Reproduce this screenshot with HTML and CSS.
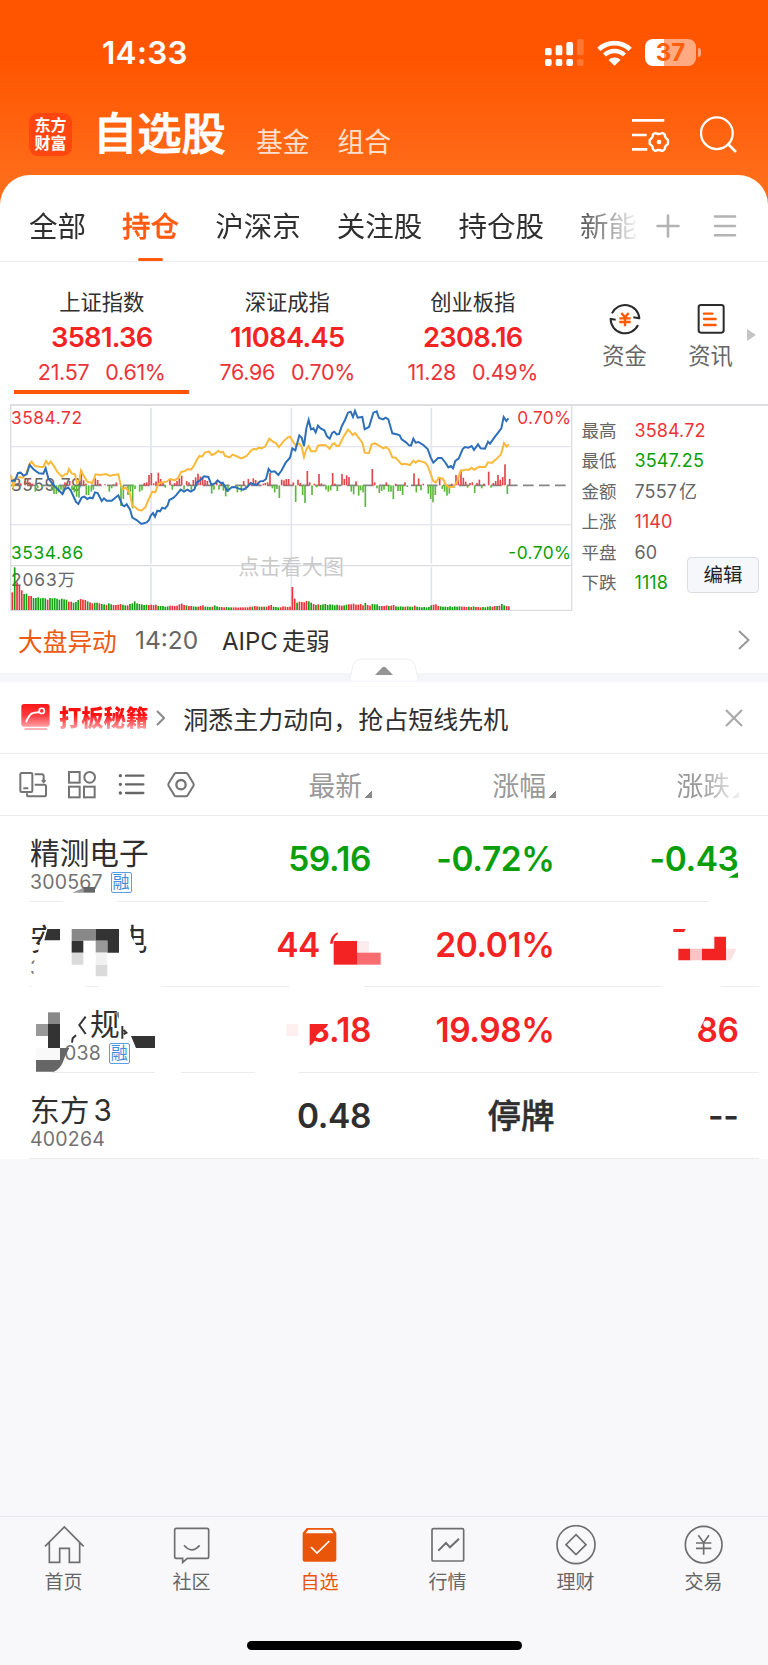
FILE: index.html
```html
<!DOCTYPE html>
<html lang="zh-CN">

<head>
    <meta charset="UTF-8">
    <meta name="viewport" content="width=device-width, initial-scale=1.0">
    <title>自选股</title>
    <link rel="stylesheet" href="styles.css">
</head>

<body>
    <header>
        <div class="status-bar">
            <span class="clock">14:33</span>
            <svg class="signal" viewBox="0 0 117 84" fill="#fff">
                <rect x="0" y="27" width="20" height="22" rx="5" />
                <rect x="32" y="19" width="20" height="30" rx="5" />
                <rect x="64" y="9" width="20" height="40" rx="5" />
                <rect x="96" y="0" width="20" height="49" rx="5" opacity=".2" />
                <rect x="0" y="60" width="20" height="21" rx="6" />
                <rect x="32" y="60" width="20" height="21" rx="6" />
                <rect x="64" y="60" width="20" height="21" rx="6" />
                <rect x="96" y="60" width="20" height="21" rx="6" opacity=".2" />
            </svg>
            <svg class="wifi" viewBox="0 0 104 78" fill="none" stroke="#fff">
                <path d="M5 28 C31 3 73 3 99 28" stroke-width="14" />
                <path d="M22 45 C39 29 65 29 82 45" stroke-width="13" />
                <path d="M34 60 C43 50 61 50 70 60 L52 77 Z" fill="#fff" stroke="none" />
            </svg>
            <div class="battery">37</div>
            <div class="battery-tip"></div>
        </div>
        <div class="title-bar">
            <div class="logo">东方<br>财富</div>
            <h1>自选股</h1>
            <a class="top-link">基金</a>
            <a class="top-link">组合</a>
            <svg class="icon-manage" viewBox="0 0 114 102" fill="none" stroke="#fff" stroke-width="8">
                <path d="M0 7H97M0 51H44M0 94H46" />
                <path d="M70 45 Q80 51 91 45 L98 49 Q98 60 108 66 V78 Q98 83 98 94 L91 99 Q80 93 70 99 L63 94 Q63 83 53 78 V66 Q63 60 63 49 Z" stroke-width="7" stroke-linejoin="round" />
                <circle cx="81" cy="72" r="7" fill="#fff" stroke="none" />
            </svg>
            <svg class="icon-search" viewBox="0 0 112 112" fill="none" stroke="#fff" stroke-width="7">
                <circle cx="51" cy="52" r="48" />
                <path d="M84 84L109 109" stroke-width="8" />
            </svg>
        </div>
    </header>

    <nav class="groups">
        <div class="group-list">
            <a>全部</a>
            <a class="active">持仓</a>
            <a>沪深京</a>
            <a>关注股</a>
            <a>持仓股</a>
            <a>新能源</a>
        </div>
        <svg class="icon-plus" viewBox="0 0 24 24" stroke="#b3b3b3" stroke-width="2.6" stroke-linecap="round">
            <path d="M1.5 12H22.5M12 1.5V22.5" />
        </svg>
        <svg class="icon-menu" viewBox="0 0 24 24" stroke="#b3b3b3" stroke-width="2.6" stroke-linecap="round">
            <path d="M2 2.5H22M2 12H22M2 21.3H22" />
        </svg>
    </nav>

    <section class="indexes">
        <div class="index active">
            <p class="index-name">上证指数</p>
            <p class="index-value">3581.36</p>
            <p class="index-change"><span>21.57</span><span>0.61%</span></p>
        </div>
        <div class="index">
            <p class="index-name">深证成指</p>
            <p class="index-value">11084.45</p>
            <p class="index-change"><span>76.96</span><span>0.70%</span></p>
        </div>
        <div class="index">
            <p class="index-name">创业板指</p>
            <p class="index-value">2308.16</p>
            <p class="index-change"><span>11.28</span><span>0.49%</span></p>
        </div>
        <div class="shortcut">
            <svg viewBox="0 0 96 96" fill="none" stroke="#2b2b2b" stroke-width="6">
                <path d="M9 31A43 43 0 0 1 91 46L73 43M2 47L20 50M5 47A43 43 0 0 0 87 66" stroke-linejoin="round" />
                <path d="M37 30L48 43L59 30M31 46H65M31 57H65M48 43V70" stroke="#ff5a00" stroke-width="7" />
            </svg>
            <span>资金</span>
        </div>
        <div class="shortcut">
            <svg viewBox="0 0 96 96" fill="none" stroke="#2b2b2b" stroke-width="6">
                <rect x="11" y="6" width="75" height="83" rx="7" />
                <path d="M27 32H52M27 48H62M27 66H62" stroke="#ff5a00" stroke-width="7" stroke-linecap="round" />
            </svg>
            <span>资讯</span>
        </div>
        <svg class="more" viewBox="0 0 9 12">
            <path d="M0 0L9 6L0 12Z" fill="#c4c4c4" />
        </svg>
    </section>

    <section class="market">
        <!-- 分时图 -->
        <svg class="chart" viewBox="0 27 1722 624">
            <g fill="none" stroke="#e2e4ee" stroke-width="4">
                <path d="M32 155H1715M32 389H1715" />
                <path d="M453 38V506M874 38V506M1294 38V506M453 517V645M874 517V645M1294 517V645" stroke-width="5" />
                <path d="M32 30V646H1715V30M32 512H1715" stroke="#dbdce4" />
            </g>
            <path d="M33 271H1705" stroke="#858585" stroke-width="5" stroke-dasharray="32 16" />
            <text class="label" x="715" y="537" textLength="317" style="font-size:63px;fill:#c9c9c9">点击看大图</text>
            <text class="label" x="33" y="289" textLength="212" fill="#666">3559.79</text>
            <text class="label" x="33" y="572" textLength="192" fill="#666">2063万</text>
            <g id="flow"></g>
            <g id="volume"></g>
            <polyline id="average" fill="none" stroke="#f9b93a" stroke-width="6" />
            <polyline id="price" fill="none" stroke="#2e6fba" stroke-width="6" />
            <text class="label up" x="33" y="86" textLength="213">3584.72</text>
            <text class="label down" x="33" y="492" textLength="217">3534.86</text>
            <text class="label up" x="1552" y="86" textLength="161">0.70%</text>
            <text class="label down" x="1525" y="492" textLength="188">-0.70%</text>
        </svg>
        <dl class="stats">
            <dt>最高</dt><dd class="up">3584.72</dd>
            <dt>最低</dt><dd class="down">3547.25</dd>
            <dt>金额</dt><dd>7557<i></i>亿</dd>
            <dt>上涨</dt><dd class="up">1140</dd>
            <dt>平盘</dt><dd>60</dd>
            <dt>下跌</dt><dd class="down">1118</dd>
        </dl>
        <button class="edit">编辑</button>
    </section>

    <section class="news">
        <span class="news-tag">大盘异动</span>
        <span class="news-time">14:20</span>
        <span class="news-text">AIPC<i></i>走弱</span>
        <svg viewBox="0 0 12 20" fill="none" stroke="#999" stroke-width="2">
            <path d="M1 1L10.500 10L1 19" />
        </svg>
        <svg class="handle" viewBox="0 0 70 24">
            <path d="M0.500 22.500L4 7.500Q6 1 14 1H56Q64 1 66 7.500L69.500 22.500" fill="#fff" stroke="#ededf0" />
            <path d="M26 17L33.500 9.300Q35 8 36.500 9.300L44 17Z" fill="#949494" />
        </svg>
    </section>

    <section class="promo">
        <svg class="promo-icon" viewBox="0 0 86 82">
            <defs>
                <linearGradient id="red" x1="0" y1="0" x2="0" y2="1">
                    <stop offset="0" stop-color="#ff1717" />
                    <stop offset=".5" stop-color="#ff3b40" />
                    <stop offset="1" stop-color="#ffa0a5" />
                </linearGradient>
            </defs>
            <rect width="86" height="69" rx="8" fill="url(#red)" />
            <path d="M12 76H76" stroke="#ffb3b6" stroke-width="6" stroke-linecap="round" />
            <path d="M15 53C20 44 24 28 37 27L53 25" fill="none" stroke="#fff" stroke-width="6" stroke-linecap="round" />
            <circle cx="62" cy="21" r="8" fill="none" stroke="#fff" stroke-width="5" />
        </svg>
        <span class="promo-tag">打板秘籍</span>
        <svg class="promo-arrow" viewBox="0 0 9 16" fill="none" stroke="#8a8a8a" stroke-width="2">
            <path d="M1 1L8 8L1 15" />
        </svg>
        <span class="promo-text">洞悉主力动向，抢占短线先机</span>
        <svg class="promo-close" viewBox="0 0 18 18" stroke="#aaa" stroke-width="2.2">
            <path d="M1 1L17 17M17 1L1 17" />
        </svg>
    </section>

    <section class="columns">
        <div class="tools">
            <svg viewBox="0 0 84 84" fill="none" stroke="#747474" stroke-width="6">
                <rect x="4" y="6" width="36" height="57" rx="4" />
                <path d="M13 52H28M47 10H69Q74 10 74 16V30M69 27L74 33L79 27M47 41H76Q81 41 81 46V71Q81 76 76 76H29Q24 76 24 71V67" />
            </svg>
            <svg viewBox="0 0 84 84" fill="none" stroke="#747474" stroke-width="6">
                <rect x="3" y="3" width="32" height="32" />
                <circle cx="65" cy="19" r="16" />
                <rect x="3" y="47" width="32" height="32" />
                <rect x="48" y="47" width="32" height="32" />
            </svg>
            <svg viewBox="0 0 84 84" fill="none" stroke="#666" stroke-width="7" stroke-linecap="round">
                <path d="M24 14H76M24 40H76M24 66H76" />
                <path d="M7 14H7.100M7 40H7.100M7 66H7.100" stroke-width="10" />
            </svg>
            <svg viewBox="0 0 84 84" fill="none" stroke="#747474" stroke-width="6" stroke-linejoin="round">
                <path d="M22 9Q24 6 28 6H56Q60 6 62 9L79 37Q81 41 79 45L62 73Q60 76 56 76H28Q24 76 22 73L5 45Q3 41 5 37Z" />
                <circle cx="42" cy="41" r="14" stroke-width="7" />
            </svg>
        </div>
        <div class="col">最新</div>
        <div class="col">涨幅</div>
        <div class="col fade">涨跌</div>
    </section>

    <section class="stocks">
        <div class="stock">
            <div class="stock-name">精测电子</div>
            <div class="stock-code">300567 <b>融</b></div>
            <div class="num down">59.16</div>
            <div class="num down">-0.72%</div>
            <div class="num down">-0.43</div>
        </div>
        <div class="stock">
            <div class="stock-name masked-name"><span>安</span><span>电</span></div>
            <div class="stock-code">3</div>
            <div class="num up masked-price">44</div>
            <div class="num up">20.01%</div>
            <div class="num up"></div>
        </div>
        <div class="stock">
            <div class="stock-name masked-rule">规</div>
            <div class="stock-code masked-code">038 <b>融</b></div>
            <div class="num up">3.18</div>
            <div class="num up">19.98%</div>
            <div class="num up">86</div>
        </div>
        <div class="stock">
            <div class="stock-name">东方<i></i>3</div>
            <div class="stock-code">400264</div>
            <div class="num">0.48</div>
            <div class="num halted">停牌</div>
            <div class="num">--</div>
        </div>
        <!-- 打码区域 -->
        <svg class="mosaic" viewBox="0 -12 2304 1029">
            <g fill="#fff">
                <path d="M190 238H350V250H190ZM2125 238H2280V250H2125Z" />
                <path d="M95 496H257V508H95ZM297 496H485V508H297ZM868 496H1092V508H868ZM1983 496H2162V508H1983Z" />
                <path d="M80 752H155V766H80ZM465 752H542V766H465ZM765 752H897V766H765Z" />
                <path d="M146 310H185V410H112L118 375Z" />
                <path d="M104 410H130V475H100Z" />
                <path d="M350 305H391V345L400 360L424 405H350Z" />
                <path d="M915 585H1000L985 612H915ZM915 690L929 677L945 665V690Z" />
                <path d="M2075 565H2124L2112 602L2092 640H2075Z" />
            </g>
            <g fill="#333">
                <path d="M217 218L250 203V218Z" fill="#999" />
                <path d="M250 201H285V218H250Z" fill="#666" />
                <path d="M142 327H180V361H133Z" />
                <path d="M215 327H287V362H215Z" fill="#888" />
                <path d="M287 327H357V398H322V362H287ZM215 362H250V398H215Z" />
                <path d="M287 362H322V398H287Z" fill="#999" />
                <path d="M215 398H250V434H215ZM287 434H322V469H287Z" fill="#dadada" />
                <path d="M287 398H322V434H287Z" fill="#f1f1f1" />
                <path d="M144 577H180V612H144Z" fill="#888" />
                <path d="M108 612H144V648H108Z" fill="#999" />
                <path d="M144 612H180V684H144Z" />
                <path d="M108 684H180V720H108Z" fill="#f9f9f9" />
                <path d="M180 684H208Q195 705 188 728Q178 748 162 755H108V720H180Z" fill="#666" />
                <path d="M343 577H357V597Z" fill="#888" />
                <path d="M393 648H465V684H408Z" />
                <path d="M257 590L238 615L257 642M216 668L218 655L228 646M367 618V656M371 630L379 638L371 642" fill="none" stroke="#333" stroke-width="6" />
            </g>
            <g fill="#f42323">
                <path d="M2185 173L2214 157V173Z" fill="#0a9f0a" />
                <path d="M990 371Q992 347 1012 337L1014 342Q1000 352 998 371Z" />
                <path d="M1001 363H1071V434H1001Z" />
                <path d="M1071 363H1107V398H1071Z" fill="#fdeced" />
                <path d="M1071 398H1142V434H1071Z" fill="#f96c70" />
                <path d="M2020 327H2057L2052 336H2020Z" />
                <path d="M2035 386H2071V421H2035ZM2106 386H2143V350H2178V421H2106Z" />
                <path d="M2071 386H2106V421H2071Z" fill="#fdc2c4" />
                <path d="M2178 386H2210L2192 421H2178Z" fill="#fde0e1" />
                <path d="M859 612H894V648H859Z" fill="#fef0f1" />
                <path d="M929 612H985L950 646L940 668L929 677Z" />
            </g>
        </svg>
    </section>

    <footer>
        <a class="tab">
            <svg viewBox="0 0 120 120"><path d="M3 64L61 6L119 64M16 52V112H47V70H76V112H107V52" /></svg>
            首页
        </a>
        <a class="tab">
            <svg viewBox="0 0 120 120"><path d="M13 10H105Q110 10 110 15V95Q110 100 105 100H46L32 112V100H13Q8 100 8 95V15Q8 10 13 10ZM36 61Q59 88 83 61" /></svg>
            社区
        </a>
        <a class="tab active">
            <svg viewBox="0 0 120 120"><path d="M20 9H98L109 24V104Q109 110 103 110H14Q8 110 8 104V24Z" fill="#e9560a" stroke="none" /><path d="M25 14H93L101 25H17Z" fill="#f8f8fb" stroke="none" /><path d="M33 66L51 84L88 48" stroke="#fff" /></svg>
            自选
        </a>
        <a class="tab">
            <svg viewBox="0 0 120 120"><rect x="12" y="11" width="95" height="97" rx="4" /><path d="M31 77L54 54L66 67L93 41" stroke-width="6" /></svg>
            行情
        </a>
        <a class="tab">
            <svg viewBox="0 0 120 120"><circle cx="60" cy="59" r="57" /><path d="M60 29L90 59L60 89L30 59Z" /></svg>
            理财
        </a>
        <a class="tab">
            <svg viewBox="0 0 120 120"><circle cx="59" cy="59" r="55" /><path d="M43 31L59 53L75 31M36 54H82M36 70H82M59 53V89" /></svg>
            交易
        </a>
        <div class="home-indicator"></div>
    </footer>

    <script src="chart.js"></script>
</body>

</html>
```
FILE: styles.css
```css
* {
    box-sizing: border-box;
}

body {
    font-family: Inter, "Noto Sans CJK SC", sans-serif;
    margin: 0;
    width: 768px;
    height: 1665px;
    display: flex;
    flex-direction: column;
    background: #f8f8fb;
    color: #2f2f2f;
    overflow: hidden;
}

h1, p, dl, dd {
    margin: 0;
}

svg {
    display: block;
    flex: none;
}

.up {
    color: #f42323;
    fill: #ee3338;
}

.down {
    color: #0a9f0a;
    fill: #0a9f0a;
}

header {
    height: 215px;
    margin-bottom: -40px;
    background: linear-gradient(#ff5500 60px, #ff6d1a 180px);
    color: #fff;
}

.status-bar {
    display: flex;
    align-items: center;
    height: 105px;
    padding-left: 102px;
}

.clock {
    width: 443px;
    font-size: 31.500px;
    font-weight: 600;
    letter-spacing: 0.3px;
}

.signal {
    width: 39px;
    height: 28px;
}

.wifi {
    width: 35px;
    height: 26px;
    margin-left: 13px;
}

.battery {
    width: 51px;
    height: 27px;
    margin-left: 13px;
    border-radius: 8px;
    background: linear-gradient(90deg, #fff 37%, #ffaa80 37%);
    color: #ff5e0c;
    font-size: 24px;
    font-weight: 700;
    line-height: 27px;
    text-align: center;
}

.battery-tip {
    width: 3px;
    height: 9px;
    margin-left: 2px;
    border-radius: 0 4px 4px 0;
    background: #ffaa80;
}

.title-bar {
    display: flex;
    align-items: center;
    height: 59px;
    padding-left: 29px;
}

.logo {
    width: 43px;
    height: 43px;
    padding-top: 3px;
    border-radius: 9px;
    background: #ff4610;
    font-size: 16px;
    font-weight: 700;
    line-height: 18px;
    text-align: center;
}

h1 {
    width: 161px;
    margin: -2px 0 0 21px;
    font-size: 44.300px;
    font-weight: 500;
    line-height: 50px;
    -webkit-text-stroke: 0.8px #fff;
}

.top-link {
    width: 81.500px;
    padding-top: 14px;
    font-size: 26.800px;
    line-height: 30px;
    color: #ffe0cf;
}

.title-bar .top-link:nth-child(3) {
    margin-left: 2px;
}

.icon-manage {
    width: 38px;
    height: 34px;
    margin-left: 213px;
}

.icon-search {
    width: 37px;
    height: 37px;
    margin-left: 30px;
}

.groups {
    display: flex;
    height: 87px;
    padding-left: 29px;
    border-bottom: 1px solid #ececee;
    border-radius: 30px 30px 0 0;
    background: #fff;
}

.group-list {
    display: flex;
    gap: 36.100px;
    width: 610px;
    overflow: hidden;
    font-size: 28.500px;
    line-height: 103px;
    white-space: nowrap;
    -webkit-mask-image: linear-gradient(90deg, #000 540px, transparent 612px);
}

.groups .active {
    display: flex;
    flex-direction: column;
    color: #ff5a10;
    font-weight: 500;
    -webkit-text-stroke: 0.3px #ff5a10;
}

.groups .active::after {
    content: "";
    width: 25px;
    height: 4px;
    margin: -20px auto 0;
    border-radius: 2px;
    background: #ff5a10;
}

.icon-plus, .icon-menu {
    width: 24px;
    height: 24px;
    margin: 39px 0 0 17px;
}

.icon-menu {
    margin-left: 33px;
}

.indexes {
    display: flex;
    height: 142px;
    padding-left: 9px;
    background: #fff;
}

.index {
    width: 185.500px;
    padding-top: 25px;
    text-align: center;
}

.index-name {
    font-size: 21.300px;
    line-height: 30px;
}

.index-value {
    font-size: 27.300px;
    font-weight: 600;
    line-height: 41px;
    letter-spacing: -0.7px;
    color: #f42323;
}

.index-change {
    display: flex;
    justify-content: center;
    gap: 16px;
    font-size: 21.500px;
    letter-spacing: -0.300px;
    line-height: 28px;
    color: #ee3338;
}

.index.active::after {
    content: "";
    display: block;
    width: 175px;
    height: 4px;
    margin: 4px 0 0 5px;
    background: #ff5500;
}

.shortcut {
    display: flex;
    flex-direction: column;
    align-items: center;
    width: 86px;
    padding-top: 41px;
    font-size: 22.300px;
    line-height: 30px;
    color: #666;
}

.shortcut svg {
    width: 32px;
    height: 32px;
    margin-bottom: 6px;
}

.shortcut:nth-child(4) {
    margin-left: 16px;
}

.more {
    width: 9px;
    height: 12px;
    margin: 67px 0 0 -7px;
}

.market {
    display: flex;
    height: 208px;
    background: linear-gradient(#dddde2, #dddde2) 10px 0 / 758px 2px no-repeat #fff;
}

.chart {
    width: 574px;
    height: 208px;
}

.label {
    font-size: 52px;
}

.stats {
    display: grid;
    grid-template-columns: 53px 80px;
    grid-auto-rows: 30.400px;
    width: 108px;
    padding: 12px 0 0 7.500px;
    font-size: 17.500px;
    line-height: 30px;
    color: #666;
}

.stats dd {
    font-size: 18px;
    letter-spacing: 0.1px;
    white-space: nowrap;
}

.stats .up {
    color: #ee3338;
}

i {
    display: inline-block;
    width: 4px;
}

.stats i {
    width: 2px;
}

.edit {
    width: 72px;
    height: 36px;
    margin: 153px 0 0 5px;
    padding: 0;
    border: 1px solid #dcdde2;
    border-radius: 4px;
    background: #f6f7fa;
    color: #222;
    font: 19.500px/34px Inter, "Noto Sans CJK SC", sans-serif;
}

.news {
    position: relative;
    display: flex;
    align-items: center;
    height: 70px;
    padding: 0 0 6px 18px;
    border-bottom: 9px solid #f5f6f9;
    background: #fff;
    font-size: 24.700px;
}

.news-tag {
    width: 117px;
    color: #ee5a10;
}

.news-time {
    width: 87px;
    color: #666;
    font-size: 24.500px;
}

.news-text {
    width: 516px;
    font-size: 24px;
}

.news svg {
    width: 12px;
    height: 20px;
}

.news .handle {
    position: absolute;
    left: 349px;
    top: 46px;
    width: 70px;
    height: 24px;
}

.promo {
    display: flex;
    align-items: center;
    height: 72px;
    padding-left: 21px;
    border-bottom: 1px solid #ececee;
    background: #fff;
}

.promo-icon {
    width: 29px;
    height: 27px;
}

.promo-tag {
    margin-left: 9px;
    background: linear-gradient(#ff1010 40%, #ffa0a5 85%);
    -webkit-background-clip: text;
    color: transparent;
    font-size: 22.300px;
    font-weight: 900;
    line-height: 30px;
}

.promo-arrow {
    width: 9px;
    height: 16px;
    margin-left: 8px;
}

.promo-text {
    width: 542px;
    margin-left: 18px;
    font-size: 25px;
}

.promo-close {
    width: 18px;
    height: 18px;
}

.columns {
    display: flex;
    align-items: center;
    height: 62px;
    border-bottom: 1px solid #ececee;
    background: #fff;
}

.tools {
    display: flex;
    gap: 21.300px;
    width: 254px;
    padding-left: 19px;
}

.tools svg {
    width: 28px;
    height: 28px;
}

.col {
    display: flex;
    justify-content: flex-end;
    width: 117px;
    font-size: 26.800px;
    color: #999;
}

.col + .col {
    width: 184px;
}

.col::after {
    content: "";
    align-self: flex-end;
    width: 7px;
    height: 7px;
    margin: 0 -1px 6px 3px;
    background: linear-gradient(135deg, transparent 50%, #888 50%);
}

.col.fade {
    -webkit-mask-image: linear-gradient(90deg, #000 145px, rgba(0, 0, 0, 0.150) 182px);
}

.stocks {
    position: relative;
    height: 343px;
    background: #fff;
}

.stock {
    display: grid;
    grid-template: 45px 20px / 226px 116px 183.500px 184px;
    height: 85.700px;
    margin: 0 9px 0 29px;
    padding-top: 15px;
    border-bottom: 1px solid #ececee;
}

.stock-name {
    padding-left: 1px;
    font-size: 29.700px;
    line-height: 45px;
}

.stock-code {
    grid-area: 2 / 1;
    padding-left: 1px;
    font-size: 19.500px;
    letter-spacing: 0.2px;
    line-height: 13px;
    color: #727272;
}

.stock-code b {
    display: inline-block;
    width: 21px;
    height: 21px;
    margin: -4px 0 -4px 2px;
    border: 1px solid #5b9fe3;
    border-radius: 2px;
    font-size: 17px;
    font-weight: 400;
    letter-spacing: 0;
    line-height: 18px;
    text-align: center;
    color: #3f8ddc;
    vertical-align: top;
}

.num {
    grid-row: 1 / 3;
    font-size: 33.500px;
    font-weight: 600;
    line-height: 57px;
    text-align: right;
    letter-spacing: -0.400px;
}

.halted {
    font-weight: 500;
    letter-spacing: 0;
    -webkit-text-stroke: 0.5px #2f2f2f;
}

.masked-name {
    display: flex;
    gap: 58px;
}

.masked-price {
    padding-right: 51px;
}

.masked-rule {
    padding-left: 61px;
}

.masked-code {
    padding-left: 35px;
}

.mosaic {
    position: absolute;
    left: 0;
    top: 0;
    width: 768px;
    height: 343px;
}

footer {
    display: flex;
    flex-wrap: wrap;
    justify-content: center;
    align-content: flex-start;
    height: 149px;
    margin-top: auto;
    border-top: 1px solid #e6e6ec;
}

.tab {
    display: flex;
    flex-direction: column;
    align-items: center;
    width: 128px;
    height: 124px;
    padding: 8px 1px 0 0;
    font-size: 19px;
    line-height: 36px;
    color: #666;
}

.tab svg {
    width: 40px;
    height: 40px;
    fill: none;
    stroke: #6e6e6e;
    stroke-width: 5;
}

.tab.active {
    color: #e9560a;
}

.home-indicator {
    width: 275px;
    height: 9px;
    border-radius: 5px;
    background: #000;
}
```
FILE: chart.js
```js
const price = '33,257 45,257 54,234 62,233 70,242 80,238 89,210 100,222 110,230 117,235 130,236 137,220 145,250 155,263 165,275 175,284 187,297 195,282 205,278 213,288 220,303 228,321 235,327 245,308 253,305 262,312 270,308 278,310 285,292 293,294 305,318 312,310 320,317 335,317 345,309 355,301 367,330 373,334 380,328 390,343 397,368 410,375 424,387 440,382 447,375 452,362 459,354 465,365 472,347 480,349 487,338 495,341 503,331 508,315 520,309 528,301 542,284 552,290 562,284 572,290 583,284 590,262 600,256 612,244 625,246 634,269 645,265 653,256 662,264 668,263 682,288 695,277 705,276 717,281 730,284 742,276 752,264 760,268 770,270 780,259 790,258 798,252 806,222 813,231 824,229 835,240 845,226 857,203 870,188 877,160 886,166 898,121 905,128 912,153 919,100 926,75 933,103 940,100 947,112 954,92 962,100 973,106 981,124 989,131 997,113 1003,110 1010,118 1017,117 1026,92 1035,75 1044,53 1052,50 1059,66 1065,48 1073,68 1087,66 1094,103 1107,96 1120,53 1130,49 1137,69 1149,73 1157,68 1165,73 1177,115 1190,118 1199,121 1205,133 1218,142 1227,151 1233,152 1240,131 1247,143 1255,141 1270,150 1283,162 1292,187 1300,203 1314,189 1325,189 1337,204 1345,217 1353,213 1359,220 1366,198 1376,191 1388,162 1395,156 1405,158 1415,153 1422,165 1434,148 1442,160 1455,161 1464,140 1470,146 1485,125 1495,112 1504,100 1511,66 1519,78 1525,70';

const average = '33,241 40,275 48,250 58,246 68,248 78,238 88,208 95,200 105,213 118,215 130,216 138,198 145,208 152,200 163,215 172,231 186,245 195,238 201,238 207,222 215,235 225,238 231,263 238,256 243,226 250,240 262,260 277,264 287,238 300,240 318,237 330,243 340,240 355,238 362,270 368,282 378,278 390,296 397,333 405,336 413,343 424,347 436,337 445,315 457,290 466,292 474,268 482,263 500,260 510,252 525,256 535,248 543,231 555,228 563,222 573,224 580,215 590,196 598,183 606,185 615,172 628,170 635,180 643,177 655,168 663,172 669,170 675,183 690,187 697,179 708,183 724,190 740,183 752,168 760,162 770,163 775,158 785,160 796,154 808,131 820,141 828,144 836,157 850,140 862,128 870,125 878,138 888,153 898,145 905,155 912,186 919,163 926,153 933,169 947,169 954,152 965,150 977,151 989,161 997,148 1003,145 1010,153 1017,153 1030,126 1044,104 1052,112 1058,120 1065,114 1087,143 1094,173 1107,174 1115,148 1125,145 1137,152 1150,160 1158,156 1168,165 1177,187 1187,188 1205,208 1215,206 1230,210 1240,197 1247,203 1255,197 1275,203 1283,212 1292,237 1300,258 1307,263 1316,248 1328,251 1338,270 1348,277 1360,275 1371,262 1381,229 1395,224 1407,224 1415,218 1422,224 1438,215 1456,216 1464,202 1475,204 1488,193 1503,178 1512,144 1520,155 1527,148';

// x, y 相对中轴 271，小于为流入
const flow = '62,265 76,258 83,250 90,262 97,266 195,262 202,266 209,258 244,228 251,256 258,266 286,250 293,255 300,266 315,268 340,268 349,262 433,264 440,262 447,240 454,234 461,265 468,259 475,233 482,252 489,264 510,252 524,264 531,258 538,250 545,242 560,258 567,262 580,255 587,247 594,236 601,245 608,249 615,255 622,258 650,256 664,266 731,258 745,252 752,262 760,250 767,255 775,260 790,266 796,264 803,262 810,234 845,254 852,256 859,252 866,252 ' +
    '106,290 113,280 127,276 155,288 162,297 169,297 176,292 183,284 190,298 216,285 223,292 230,305 237,308 259,300 266,300 274,290 280,284 328,290 335,280 363,333 370,312 384,300 391,290 398,340 405,282 419,290 426,286 496,278 517,284 552,284 574,286 635,296 642,284 657,284 670,287 677,304 684,290 712,292 724,290 738,284 817,280 824,292 831,282 838,309 ' +
    '880,262 894,254 901,264 922,228 929,262 943,266 957,237 964,265 998,234 1005,266 1026,237 1033,252 1040,241 1047,246 1068,259 1117,222 1124,262 1159,262 1187,266 1215,262 1242,235 1256,250 1270,266 1319,248 1355,266 1368,240 1375,250 1383,224 1390,248 1397,260 1410,264 1417,262 1431,264 1438,254 1452,266 1466,230 1480,264 1487,258 1494,240 1501,254 1508,246 1515,208 1529,252 ' +
    '887,321 908,300 915,324 936,300 950,277 978,284 985,290 992,286 1012,288 1054,290 1061,298 1076,302 1082,286 1089,292 1096,336 1131,280 1138,294 1145,288 1152,284 1166,290 1173,290 1180,312 1194,288 1201,288 1208,300 1222,276 1249,292 1263,286 1285,296 1292,312 1299,322 1306,300 1327,282 1334,290 1341,302 1348,296 1362,278 1403,278 1424,294 1445,280 1473,278 1522,297';

const volume = [53, 128, 83, 75, 59, 48, 49, 42, 42, 36, 36, 38, 35, 36, 35, 31, 36, 35, 36, 34, 31, 34, 32, 31, 25, 25, 22, 24, 30, 33, 31, 30, 26, 23, 20, 22, 22, 20, 18, 17, 15, 20, 17, 15, 15, 16, 18, 16, 14, 14, 18, 20, 26, 20, 18, 17, 15, 16, 15, 16, 15, 16, 12, 12, 12, 10, 11, 13, 13, 12, 13, 17, 19, 15, 14, 12, 12, 11, 10, 10, 12, 14, 10, 10, 9, 10, 14, 11, 9, 9, 8, 9, 8, 8, 8, 8, 7, 8, 8, 8, 8, 10, 10, 12, 11, 10, 10, 10, 10, 13, 15, 10, 9, 8, 8, 11, 10, 9, 10, 69, 34, 22, 25, 24, 23, 27, 26, 22, 18, 15, 17, 15, 17, 18, 15, 17, 16, 14, 16, 14, 13, 14, 16, 17, 17, 19, 16, 16, 18, 14, 21, 15, 13, 18, 17, 17, 12, 12, 12, 14, 12, 13, 15, 11, 10, 11, 10, 10, 11, 10, 10, 13, 10, 9, 8, 9, 8, 9, 14, 16, 17, 12, 11, 10, 10, 9, 11, 9, 11, 10, 11, 10, 10, 9, 10, 9, 11, 9, 9, 8, 9, 8, 10, 11, 10, 12, 12, 13, 18, 14, 12, 11];
const colors = 'rgrrrggrrggggggrggggggggrrgggrrrgrrggrggrggrrrrggrggggggggrrrrgggggrrrrrrrgrrggrrrgggrgggrrgggrrrrrrrrgrrgrgrrrgggrrrrrrrgrrrrggrgrggggggggrrggrrrrrrrgrrggggrrrgrrggggrgggrgggggggrrrgggggggggrrrgrgrrrggggrrgrggrrrrrrgrrr';

function bar(x, y, h, color) {
    return `<rect x="${x - 2.5}" y="${y}" width="5" height="${h}" fill="${color}"/>`;
}

document.getElementById('price').setAttribute('points', price);
document.getElementById('average').setAttribute('points', average);

document.getElementById('flow').innerHTML = flow.split(' ').map(p => {
    const [x, y] = p.split(',').map(Number);
    return bar(x, Math.min(y, 271), Math.abs(y - 271), y < 271 ? '#e2474c' : '#5cb83c');
}).join('');

document.getElementById('volume').innerHTML = volume.map((h, i) =>
    bar(37 + i * 7.06, 645 - h, h, colors[i] === 'r' ? '#ee3038' : '#12a012')
).join('');
```
